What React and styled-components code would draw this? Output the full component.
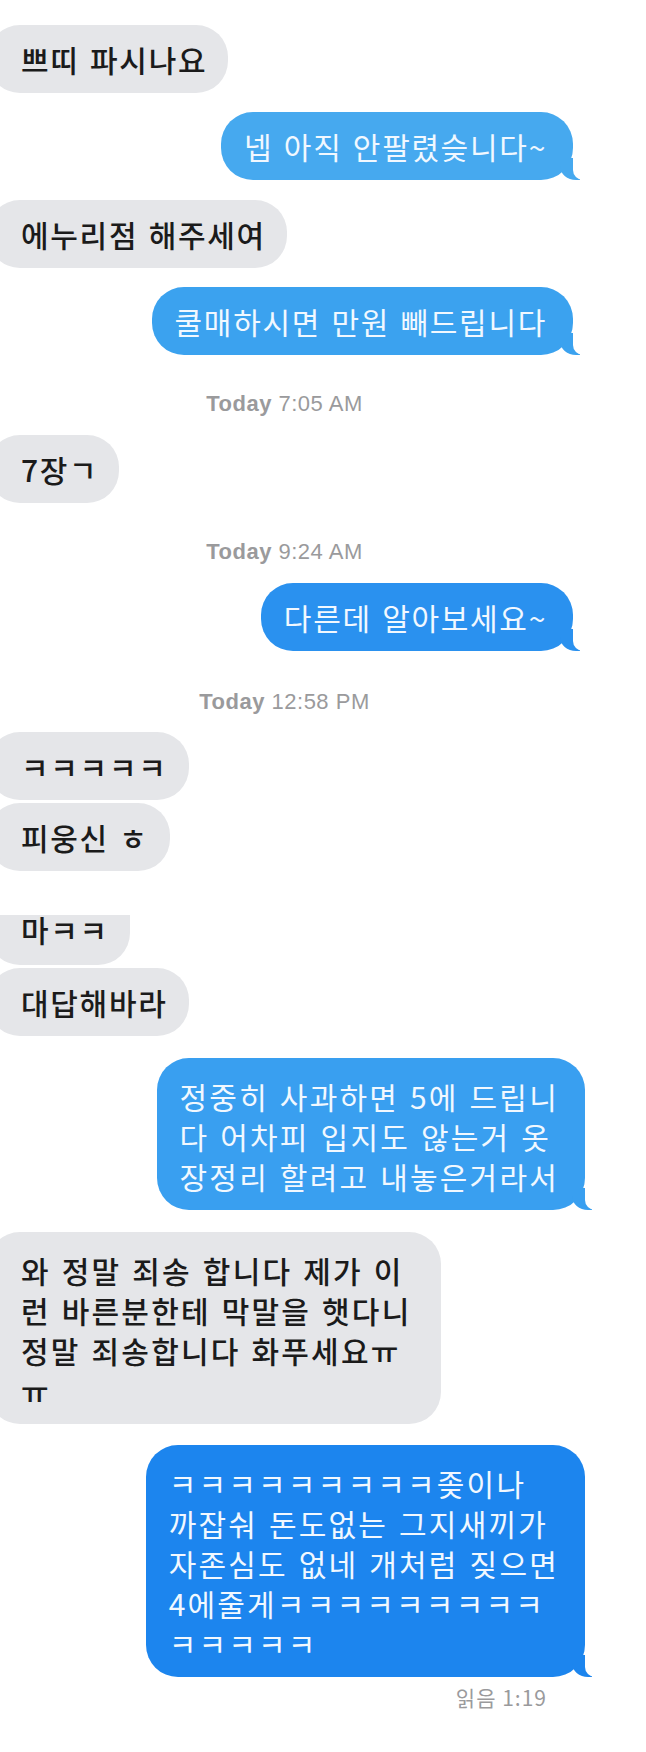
import React from 'react';
import styled, { createGlobalStyle, css } from 'styled-components';

const Global = createGlobalStyle`
  html, body { margin: 0; padding: 0; background: #ffffff; }
  body { overflow-x: hidden; font-family: "Noto Sans CJK KR", "Noto Sans", sans-serif; }
`;

const Page = styled.div`
  width: 646px;
  min-height: 1752px;
  box-sizing: border-box;
  padding-top: 25px;
  background: #ffffff;
  overflow: hidden;
  display: flex;
  flex-direction: column;
`;

const Row = styled.div`
  display: flex;
  justify-content: ${p => (p.$out ? 'flex-end' : 'flex-start')};
  margin-top: ${p => p.$mt || 0}px;
  padding-right: ${p => (p.$out ? p.$right || 73 : 0)}px;
`;

const Bubble = styled.div`
  position: relative;
  box-sizing: border-box;
  font-family: "Noto Sans CJK KR", "Noto Sans", sans-serif;
  font-size: 30px;
  font-weight: ${p => (p.$out ? 400 : 500)};
  line-height: 40px;
  letter-spacing: ${p => (p.$wide ? 2.2 : 1.7)}px;
  word-spacing: 2px;
  white-space: nowrap;
  border-radius: 32px;
  background: ${p => p.$bg || '#e5e6e9'};
  color: ${p => (p.$out ? '#f1f8ff' : '#1b1b1b')};
  padding: ${p => (p.$multi ? '18px 26px 14px 23px' : '14px 26px 14px 23px')};

  ${p => !p.$out && css`
    margin-left: -12px;
    padding-left: 33px;
    padding-right: ${p.$pr || 21}px;
  `}

  ${p => p.$cut && css`
    border-top-left-radius: 0;
    border-top-right-radius: 0;
    padding-top: 0;
    padding-bottom: 16px;
  `}

  &::before {
    content: '';
    position: absolute;
    bottom: 0;
    height: 22px;
    width: 20px;
    background: inherit;
    ${p => (p.$out
      ? css`right: -7px; border-bottom-left-radius: 16px 14px;`
      : css`left: -7px; border-bottom-right-radius: 16px 14px;`)}
  }

  &::after {
    content: '';
    position: absolute;
    bottom: 0;
    height: 22px;
    width: 26px;
    background: #ffffff;
    ${p => (p.$out
      ? css`right: -26px; border-bottom-left-radius: 10px;`
      : css`left: -26px; border-bottom-right-radius: 10px;`)}
  }
`;

const Line = styled.span`
  display: block;
  position: relative;
  z-index: 1;
  margin-top: ${p => p.$shift || 0}px;
`;

const Stamp = styled.div`
  width: 569px;
  margin-top: ${p => p.$mt}px;
  text-align: center;
  font-family: "Liberation Sans", Arial, sans-serif;
  font-size: 22px;
  line-height: 22px;
  letter-spacing: 0.5px;
  color: #9a9a9c;
  b { font-weight: 700; }
`;

const Receipt = styled.div`
  margin-top: ${p => p.$mt}px;
  padding-right: 99px;
  text-align: right;
  font-family: "Noto Sans CJK KR", "Noto Sans", sans-serif;
  font-size: 21px;
  line-height: 24px;
  letter-spacing: 1px;
  color: #9a9a9c;
`;

function Msg({ out, mt, right, bg, multi, cut, pr, wide, lines }) {
  return (
    <Row $out={out} $mt={mt} $right={right}>
      <Bubble $out={out} $bg={bg} $multi={multi} $cut={cut} $pr={pr} $wide={wide}>
        {lines.map((l, i) => (
          <Line key={i} $shift={cut && i === 0 ? -6 : 0}>{l}</Line>
        ))}
      </Bubble>
    </Row>
  );
}

export default function App() {
  return (
    <>
      <Global />
      <Page>
        <Msg lines={['쁘띠 파시나요']} />
        <Msg out mt={19} bg="#46a9ef" lines={['넵 아직 안팔렸슺니다~']} />
        <Msg mt={20} lines={['에누리점 해주세여']} />
        <Msg out mt={19} bg="#3ba2ef" lines={['쿨매하시면 만원 빼드립니다']} />
        <Stamp $mt={38}><b>Today</b> 7:05 AM</Stamp>
        <Msg mt={20} lines={['7장ㄱ']} />
        <Stamp $mt={38}><b>Today</b> 9:24 AM</Stamp>
        <Msg out mt={20} bg="#2a91ef" lines={['다른데 알아보세요~']} />
        <Stamp $mt={40}><b>Today</b> 12:58 PM</Stamp>
        <Msg mt={19} lines={['ㅋㅋㅋㅋㅋ']} />
        <Msg mt={3} lines={['피웅신 ㅎ']} />
        <Msg mt={44} cut lines={['마ㅋㅋ']} />
        <Msg mt={3} lines={['대답해바라']} />
        <Msg
          out
          multi
          wide
          mt={22}
          right={61}
          bg="#399ff0"
          lines={['정중히 사과하면 5에 드립니', '다 어차피 입지도 않는거 옷', '장정리 할려고 내놓은거라서']}
        />
        <Msg
          multi
          wide
          mt={22}
          pr={30}
          lines={['와 정말 죄송 합니다 제가 이', '런 바른분한테 막말을 햇다니', '정말 죄송합니다 화푸세요ㅠ', 'ㅠ']}
        />
        <Msg
          out
          multi
          wide
          mt={21}
          right={61}
          bg="#1c85ee"
          lines={['ㅋㅋㅋㅋㅋㅋㅋㅋㅋ좆이나', '까잡숴 돈도없는 그지새끼가', '자존심도 없네 개처럼 짖으면', '4에줄게ㅋㅋㅋㅋㅋㅋㅋㅋㅋ', 'ㅋㅋㅋㅋㅋ']}
        />
        <Receipt $mt={8}>읽음 1:19</Receipt>
      </Page>
    </>
  );
}
